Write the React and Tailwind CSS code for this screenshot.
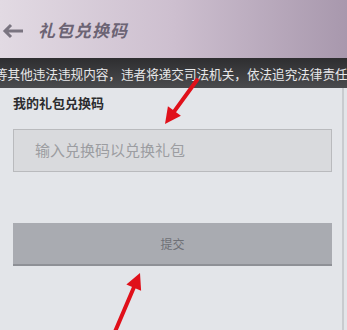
import React from 'react';

function Arrow({x1, y1, x2, y2}) {
	// red pointer arrow drawn over the page
	const dx = x2 - x1
	const dy = y2 - y1
	const len = Math.sqrt(dx * dx + dy * dy)
	const ux = dx / len
	const uy = dy / len
	const hx = x2 - ux * 16
	const hy = y2 - uy * 16
	const px = -uy
	const py = ux
	const head = `${x2},${y2} ${hx + px * 8},${hy + py * 8} ${hx - px * 8},${hy - py * 8}`
	return (
		<>
			<line x1={x1} y1={y1} x2={hx} y2={hy} stroke="#e0101a" strokeWidth="4" strokeLinecap="round" />
			<polygon points={head} fill="#e0101a" />
		</>
	)
}

export default function App() {
	return (
		<div className="relative w-[347px] h-[330px] overflow-hidden bg-[#e3e5e9] font-['Noto_Sans_CJK_SC','Noto_Sans',sans-serif]">
			<div className="h-[58px] flex items-center bg-gradient-to-r from-[#e2dae3] via-[#cdbfcf] to-[#a898ad]">
				<svg className="ml-[2px] mt-[3px]" width="22" height="16" viewBox="0 0 22 16">
					<path d="M21 8H3M9 2L3 8l6 6" fill="none" stroke="#7a7480" strokeWidth="3" />
				</svg>
				<span className="ml-[14px] mt-[2px] text-[17px] font-bold italic text-[#6c6474] tracking-[1px]">礼包兑换码</span>
			</div>
			<div className="h-[30px] flex items-center bg-gradient-to-b from-[#2e2e30] to-[#4a4b4e] overflow-hidden whitespace-nowrap">
				<span className="-ml-[5px] mt-[2px] text-[12.6px] text-[#e8e8ea]">等其他违法违规内容，违者将递交司法机关，依法追究法律责任</span>
			</div>
			<div className="mr-[3px] border-r-2 border-[#c9cbcf] h-full pl-[13px] pr-[10px]">
				<div className="pt-[6px] text-[13px] font-bold text-[#2c2c2e] leading-[17px]">我的礼包兑换码</div>
				<div className="mt-[18px] h-[43px] bg-[#d9dadd] border border-[#b9babd] flex items-center pl-[21px] text-[15px] text-[#9c9da1]">
					输入兑换码以兑换礼包
				</div>
				<div className="mt-[51px] h-[43px] bg-[#a9abb1] border-b-2 border-[#8e9096] flex items-center justify-center text-[12px] text-[#6e7076]">
					提交
				</div>
			</div>
			<svg className="absolute inset-0 pointer-events-none" width="347" height="330">
				<Arrow x1={197} y1={80} x2={165} y2={124} />
				<Arrow x1={114} y1={334} x2={140} y2={273} />
			</svg>
		</div>
	);
}
